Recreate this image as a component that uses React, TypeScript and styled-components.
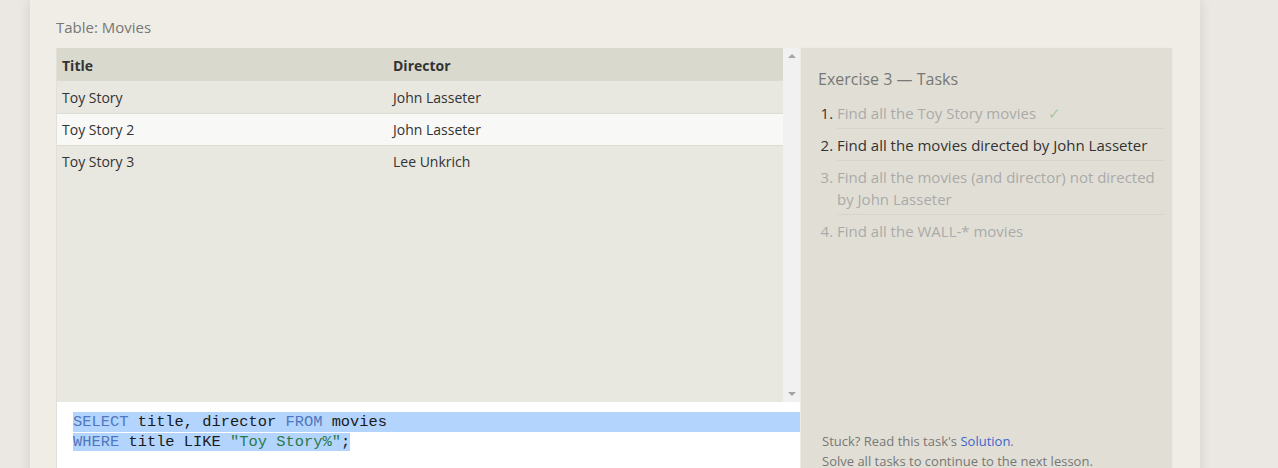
import styled, { createGlobalStyle } from "styled-components";

const GlobalStyle = createGlobalStyle`
    html, body {
        margin: 0;
        padding: 0;
        background: #ebe8e4;
        overflow: hidden;
    }
`;

const Page = styled.div`
    height: 468px;
    overflow: hidden;
    font-family: "Open Sans", "Noto Sans", sans-serif;
`;

const Card = styled.div`
    margin-left: 30px;
    width: 1170px;
    box-sizing: border-box;
    padding: 17px 28px 0 26px;
    background: #f0ede6;
    box-shadow: 0 0 12px rgba(0, 0, 0, 0.11);
`;

const Caption = styled.div`
    font-size: 15px;
    line-height: 20px;
    color: #777;
    margin-bottom: 11px;
`;

const Workspace = styled.div`
    display: flex;
    gap: 1px;
    height: 440px;
`;

const LeftColumn = styled.div`
    width: 744px;
    display: flex;
    flex-direction: column;
    border-left: 1px solid #e2e0d9;
    box-sizing: border-box;
`;

const ResultArea = styled.div`
    height: 354px;
    display: flex;
    background: #e8e7e0;
`;

const Table = styled.table`
    flex: 1;
    align-self: flex-start;
    border-collapse: collapse;
    font-size: 14px;
    color: #333;
`;

const HeadCell = styled.th`
    text-align: left;
    font-weight: 700;
    background: #dad9ce;
    height: 33px;
    padding: 2px 5px 0;
    box-sizing: border-box;
    width: ${(props: { w?: number }) => (props.w ? `${props.w}px` : "auto")};
`;

const Row = styled.tr<{ $alt?: boolean }>`
    background: ${(p) => (p.$alt ? "#f8f8f6" : "#e8e7e0")};
    border-bottom: 1px solid #dcdbd4;
    &:last-child {
        border-bottom: none;
    }
`;

const Cell = styled.td`
    height: 32px;
    padding: 1px 5px 0;
    box-sizing: border-box;
`;

const Scrollbar = styled.div`
    width: 17px;
    background: #f1f1f1;
    display: flex;
    flex-direction: column;
    justify-content: space-between;
    align-items: center;
    padding: 6px 0;
    box-sizing: border-box;
`;

const Arrow = styled.div<{ $down?: boolean }>`
    width: 0;
    height: 0;
    border-left: 4px solid transparent;
    border-right: 4px solid transparent;
    ${(p) =>
        p.$down
            ? "border-top: 4px solid #a3a3a3;"
            : "border-bottom: 4px solid #a3a3a3;"}
`;

const Editor = styled.div`
    flex: 1;
    background: #fff;
    padding: 10px 0 0 16px;
    font-family: "Liberation Mono", "DejaVu Sans Mono", monospace;
    font-size: 15.4px;
    line-height: 20px;
    color: #1a1a1a;
`;

const SelectedLine = styled.div`
    background: #b3d4fc;
    white-space: pre;
`;

const SelectedText = styled.span`
    background: #b3d4fc;
    white-space: pre;
`;

const Keyword = styled.span`
    color: #5077c0;
`;

const Str = styled.span`
    color: #2b7a4b;
`;

const TaskPanel = styled.div`
    flex: 1;
    background: #e1dfd5;
    box-shadow: 0 0 3px rgba(0, 0, 0, 0.04);
    padding: 20px 7px 17px 17px;
    display: flex;
    flex-direction: column;
    box-sizing: border-box;
`;

const PanelTitle = styled.div`
    font-size: 16px;
    line-height: 22px;
    color: #777;
    margin-bottom: 7px;
`;

const TaskList = styled.ol`
    margin: 0;
    padding-left: 19px;
    font-size: 15px;
    line-height: 22px;
`;

type TaskState = "done" | "current" | "todo";

const Task = styled.li<{ $state: TaskState }>`
    padding: 5px 0 4px;
    color: ${(p) => (p.$state === "current" ? "#333" : "#aaa")};
    border-bottom: 1px solid rgba(0, 0, 0, 0.045);
    &::marker {
        color: ${(p) => (p.$state === "todo" ? "#aaa" : "#333")};
    }
    &:last-child {
        border-bottom: none;
    }
`;

const Check = styled.span`
    color: #a6c7a2;
    margin-left: 12px;
`;

const Footer = styled.div`
    margin-top: auto;
    padding-left: 4px;
    font-size: 13px;
    line-height: 20px;
    color: #777;
`;

const SolutionLink = styled.a`
    color: #3c66cc;
    text-decoration: none;
`;

const movies = [
    { title: "Toy Story", director: "John Lasseter" },
    { title: "Toy Story 2", director: "John Lasseter" },
    { title: "Toy Story 3", director: "Lee Unkrich" },
];

const tasks: { text: string; state: TaskState }[] = [
    { text: "Find all the Toy Story movies", state: "done" },
    { text: "Find all the movies directed by John Lasseter", state: "current" },
    { text: "Find all the movies (and director) not directed by John Lasseter", state: "todo" },
    { text: "Find all the WALL-* movies", state: "todo" },
];

function App() {
    return (
        <Page>
            <GlobalStyle />
            <Card>
                <Caption>Table: Movies</Caption>
                <Workspace>
                    <LeftColumn>
                        <ResultArea>
                            <Table>
                                <thead>
                                    <tr>
                                        <HeadCell w={331}>Title</HeadCell>
                                        <HeadCell>Director</HeadCell>
                                    </tr>
                                </thead>
                                <tbody>
                                    {movies.map((m, i) => (
                                        <Row key={m.title} $alt={i === 1}>
                                            <Cell>{m.title}</Cell>
                                            <Cell>{m.director}</Cell>
                                        </Row>
                                    ))}
                                </tbody>
                            </Table>
                            <Scrollbar>
                                <Arrow />
                                <Arrow $down />
                            </Scrollbar>
                        </ResultArea>
                        <Editor>
                            <SelectedLine>
                                <Keyword>SELECT</Keyword> title, director <Keyword>FROM</Keyword> movies
                            </SelectedLine>
                            <div>
                                <SelectedText>
                                    <Keyword>WHERE</Keyword> title LIKE <Str>"Toy Story%"</Str>;
                                </SelectedText>
                            </div>
                        </Editor>
                    </LeftColumn>
                    <TaskPanel>
                        <PanelTitle>Exercise 3 — Tasks</PanelTitle>
                        <TaskList>
                            {tasks.map((t) => (
                                <Task key={t.text} $state={t.state}>
                                    {t.text}
                                    {t.state === "done" && <Check>✓</Check>}
                                </Task>
                            ))}
                        </TaskList>
                        <Footer>
                            Stuck? Read this task's <SolutionLink href="#">Solution</SolutionLink>.
                            <br />
                            Solve all tasks to continue to the next lesson.
                        </Footer>
                    </TaskPanel>
                </Workspace>
            </Card>
        </Page>
    );
}

export default App;
